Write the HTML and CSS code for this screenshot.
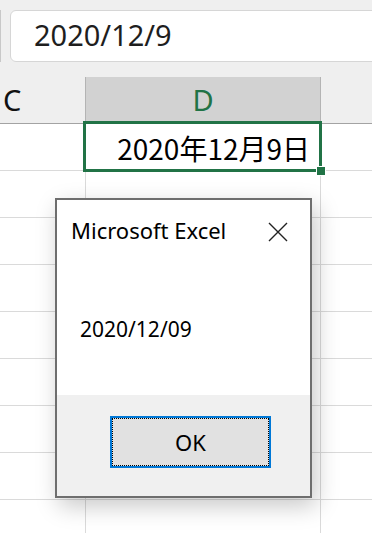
FILE: index.html
```html
<!DOCTYPE html>
<html lang="ja">
<head>
    <meta charset="utf-8">
    <title>Excel - 日付</title>
    <link rel="stylesheet" href="styles.css">
</head>
<body>
    <div class="formula-bar">
        <div class="name-box-edge"></div>
        <div class="formula-input">2020/12/9</div>
    </div>

    <div class="sheet">
        <div class="col-head col-c">C</div>
        <div class="col-head col-d active">D</div>
        <div class="col-head col-e"></div>

        <div class="cell col-c"></div>
        <div class="cell col-d selected-cell">
            <span class="value">2020年12月9日</span>
            <div class="selection"><div class="fill-handle"></div></div>
        </div>
        <div class="cell col-e"></div>

        <div class="cell col-c"></div><div class="cell col-d"></div><div class="cell col-e"></div>
        <div class="cell col-c"></div><div class="cell col-d"></div><div class="cell col-e"></div>
        <div class="cell col-c"></div><div class="cell col-d"></div><div class="cell col-e"></div>
        <div class="cell col-c"></div><div class="cell col-d"></div><div class="cell col-e"></div>
        <div class="cell col-c"></div><div class="cell col-d"></div><div class="cell col-e"></div>
        <div class="cell col-c"></div><div class="cell col-d"></div><div class="cell col-e"></div>
        <div class="cell col-c"></div><div class="cell col-d"></div><div class="cell col-e"></div>
        <div class="cell col-c"></div><div class="cell col-d"></div><div class="cell col-e"></div>
    </div>

    <div class="msgbox">
        <div class="msgbox-body">
            <div class="msgbox-title">
                <span>Microsoft Excel</span>
                <svg class="close" width="20" height="20" viewBox="0 0 20 20">
                    <path d="M1 1 L19 19 M19 1 L1 19" stroke="#222" stroke-width="1.4" fill="none"/>
                </svg>
            </div>
            <div class="msgbox-text">2020/12/09</div>
        </div>
        <div class="msgbox-footer">
            <button class="ok-button">OK</button>
        </div>
    </div>
</body>
</html>
```

FILE: styles.css
```css
body {
    margin: 0;
    background-color: #ffffff;
    font-family: "Noto Sans", "Noto Sans CJK JP", sans-serif;
    color: #000;
    overflow: hidden;
    height: 533px;
    position: relative;
}

/* formula bar */
.formula-bar {
    display: flex;
    align-items: flex-start;
    height: 77px;
    padding-top: 10px;
    box-sizing: border-box;
    background-color: #efefef;
}

.name-box-edge {
    width: 1px;
    height: 52px;
    background-color: #c8c8c8;
    margin-right: 9px;
}

.formula-input {
    flex: 1;
    height: 52px;
    box-sizing: border-box;
    margin-right: -12px;
    padding-left: 23px;
    background-color: #fff;
    border: 1px solid #d6d6d6;
    border-radius: 6px;
    font-size: 29px;
    line-height: 48px;
    color: #1e1e1e;
}

/* sheet grid */
.sheet {
    display: grid;
    grid-template-columns: 86px 235px 1fr;
    grid-auto-rows: 47px;
    background-color: #efefef;
}

.col-head {
    box-sizing: border-box;
    border-bottom: 1px solid #a3a3a3;
    font-size: 29px;
    line-height: 46px;
    color: #111;
}

.col-head.col-c {
    padding-left: 3px;
}

.col-head.active {
    background-color: #d2d2d2;
    border-left: 1px solid #b4b4b4;
    border-right: 1px solid #b4b4b4;
    text-align: center;
    color: #217346;
    margin-left: -1px;
}

.cell {
    box-sizing: border-box;
    background-color: #fff;
    border-bottom: 1px solid #dadada;
}

.cell.col-c,
.cell.col-d {
    border-right: 1px solid #dadada;
}

.selected-cell {
    position: relative;
    display: flex;
    align-items: center;
    justify-content: flex-end;
    padding-right: 10px;
}

.value {
    font-family: "Noto Sans CJK JP", sans-serif;
    font-size: 28px;
    line-height: 46px;
    margin-top: 2px;
    color: #000;
}

.selection {
    position: absolute;
    top: -3px;
    left: -3px;
    right: -2px;
    bottom: -2px;
    border: 3px solid #217346;
}

.fill-handle {
    position: absolute;
    right: -6px;
    bottom: -6px;
    width: 8px;
    height: 8px;
    background-color: #217346;
    box-shadow: 0 0 0 1px #fff;
}

/* message box */
.msgbox {
    position: absolute;
    left: 55px;
    top: 198px;
    width: 257px;
    height: 300px;
    box-sizing: border-box;
    border: 2px solid #6e6e6e;
    background-color: #f0f0f0;
    display: flex;
    flex-direction: column;
    box-shadow: 4px 8px 22px rgba(0, 0, 0, 0.22);
}

.msgbox-body {
    height: 195px;
    background-color: #fff;
}

.msgbox-title {
    display: flex;
    justify-content: space-between;
    align-items: center;
    padding: 15px 22px 0 14px;
    font-size: 22px;
    line-height: 30px;
    color: #000;
}

.close {
    margin-top: 4px;
}

.msgbox-text {
    padding: 70px 0 0 23px;
    font-size: 21px;
    line-height: 28px;
    color: #000;
}

.msgbox-footer {
    flex: 1;
    padding: 21px 0 0 53px;
}

.ok-button {
    width: 161px;
    height: 52px;
    box-sizing: border-box;
    border: 2px solid #0078d7;
    background-color: #e1e1e1;
    outline: 1px dotted #000;
    outline-offset: -3px;
    font-family: "Noto Sans", sans-serif;
    font-size: 22px;
    color: #000;
    padding: 0;
}
```
